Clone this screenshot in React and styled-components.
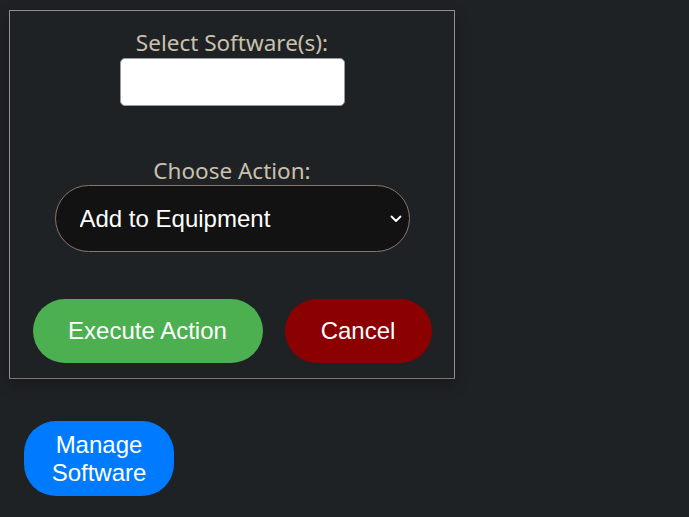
import styled, { createGlobalStyle } from "styled-components";

const GlobalStyle = createGlobalStyle`
  html, body {
    margin: 0;
    padding: 0;
    background: #1f2224;
  }
  body {
    font-family: "Liberation Sans", Arial, sans-serif;
  }
`;

const Page = styled.div`
  padding: 10px 0 0 9px;
  min-height: 507px;
  box-sizing: border-box;
`;

const Panel = styled.div`
  width: 446px;
  height: 369px;
  box-sizing: border-box;
  border: 1px solid #8f8f8f;
  border-bottom-color: #86716d;
  box-shadow: 0 6px 14px rgba(0, 0, 0, 0.25);
  display: flex;
  flex-direction: column;
  align-items: center;
  padding-top: 19px;
`;

const Label = styled.label`
  font-family: "Noto Sans", "Open Sans", sans-serif;
  font-size: 22.5px;
  line-height: 26px;
  color: #c9c0ae;
  margin-top: ${(props) => props.$top || 0}px;
`;

const TextInput = styled.input`
  width: 225px;
  height: 48px;
  box-sizing: border-box;
  margin-top: 2px;
  border: 1px solid #9a9a9a;
  border-radius: 5px;
  background: #ffffff;
  outline: none;
`;

const SelectWrap = styled.div`
  position: relative;
  margin-top: 1px;
`;

const Select = styled.select`
  appearance: none;
  width: 355px;
  height: 67px;
  box-sizing: border-box;
  border: 1px solid #8a7470;
  border-radius: 34px;
  background: #121212;
  color: #ffffff;
  font-family: "Liberation Sans", Arial, sans-serif;
  font-size: 24px;
  padding-left: 24px;
  outline: none;
`;

const Chevron = styled.svg`
  position: absolute;
  right: 8px;
  top: 30px;
  pointer-events: none;
`;

const ButtonRow = styled.div`
  display: flex;
  gap: 22px;
  margin-top: 47px;
`;

const Button = styled.button`
  width: ${(props) => props.$w}px;
  height: ${(props) => props.$h || 64}px;
  border: none;
  border-radius: 32px;
  background: ${(props) => props.$bg};
  color: #ffffff;
  font-family: "Liberation Sans", Arial, sans-serif;
  font-size: 24px;
  line-height: 28px;
  padding: 0;
  cursor: pointer;
`;

const Footer = styled.div`
  margin-top: 42px;
  padding-left: 15px;
`;

function App() {
  return (
    <>
      <GlobalStyle />
      <Page>
        <Panel>
          <Label>Select Software(s):</Label>
          <TextInput type="text" />
          <Label $top={52}>Choose Action:</Label>
          <SelectWrap>
            <Select defaultValue="add">
              <option value="add">Add to Equipment</option>
              <option value="remove">Remove from Equipment</option>
            </Select>
            <Chevron width="12" height="8" viewBox="0 0 12 8">
              <path d="M1.5 1.5 L6 6 L10.5 1.5" fill="none" stroke="#ffffff" strokeWidth="1.8" strokeLinecap="round" strokeLinejoin="round" />
            </Chevron>
          </SelectWrap>
          <ButtonRow>
            <Button $w={230} $bg="#4caf50">Execute Action</Button>
            <Button $w={147} $bg="#8b0000">Cancel</Button>
          </ButtonRow>
        </Panel>
        <Footer>
          <Button $w={150} $h={75} $bg="#007bff">
            Manage
            <br />
            Software
          </Button>
        </Footer>
      </Page>
    </>
  );
}

export default App;
